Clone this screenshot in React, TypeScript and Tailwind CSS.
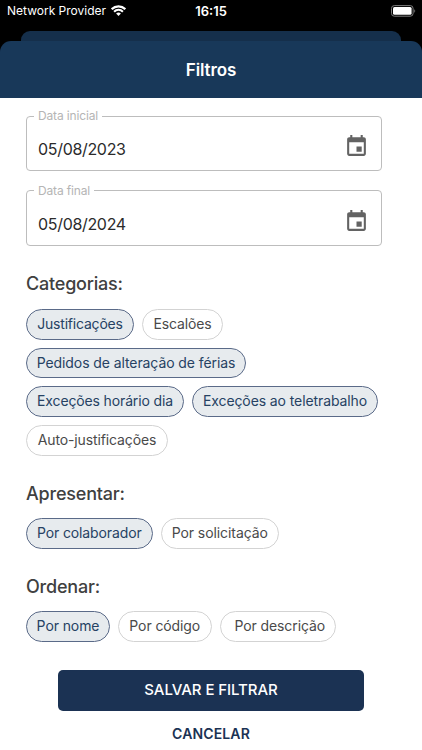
import { useState, type ReactNode } from 'react'
import clsx from 'clsx'

type Option = {
  id: string
  label: string
  className: string
}

const CATEGORIES: Option[] = [
  { id: 'justificacoes', label: 'Justificações', className: 'w-[108px] tracking-[-0.2px]' },
  { id: 'escaloes', label: 'Escalões', className: 'w-[81px] tracking-[-0.12px]' },
  { id: 'ferias', label: 'Pedidos de alteração de férias', className: 'w-[220px] tracking-[-0.09px]' },
  { id: 'horario', label: 'Exceções horário dia', className: 'w-[158px] tracking-[-0.14px]' },
  { id: 'teletrabalho', label: 'Exceções ao teletrabalho', className: 'w-[186px] tracking-[-0.1px]' },
  { id: 'auto', label: 'Auto-justificações', className: 'w-[142px] tracking-[-0.12px]' },
]

const GROUPINGS: Option[] = [
  { id: 'colaborador', label: 'Por colaborador', className: 'w-[126.5px] tracking-[-0.12px]' },
  { id: 'solicitacao', label: 'Por solicitação', className: 'w-[118.5px] tracking-[-0.08px]' },
]

const ORDERS: Option[] = [
  { id: 'nome', label: 'Por nome', className: 'w-[84px] tracking-[-0.1px]' },
  { id: 'codigo', label: 'Por código', className: 'w-[93.5px] tracking-[-0.1px]' },
  { id: 'descricao', label: 'Por descrição', className: 'w-[116.5px] pl-[4px] tracking-[-0.1px]' },
]

export default function App() {
  const [categories, setCategories] = useState(['justificacoes', 'ferias', 'horario', 'teletrabalho'])
  const [grouping, setGrouping] = useState('colaborador')
  const [order, setOrder] = useState('nome')

  const toggleCategory = (id: string) =>
    setCategories((prev) => (prev.includes(id) ? prev.filter((c) => c !== id) : [...prev, id]))

  return (
    <div className="flex h-[750px] w-[422px] flex-col overflow-hidden bg-black font-['Inter',sans-serif]">
      <StatusBar />
      <div className="mx-[21px] h-[10px] shrink-0 rounded-t-[9px] bg-[#152f4b]" />
      <header className="flex h-[57px] shrink-0 items-center justify-center rounded-t-[11px] bg-[#183859]">
        <h1 className="pt-[2px] text-[17px] font-semibold tracking-[-0.1px] text-white">Filtros</h1>
      </header>

      <main className="flex flex-1 flex-col bg-white pt-[17px]">
        <div className="flex flex-col gap-[18.5px] pr-[40.5px] pl-[26px]">
          <DateField label="Data inicial" value="05/08/2023" />
          <DateField label="Data final" value="05/08/2024" />
        </div>

        <div className="pr-[34px] pl-[26px]">
          <Section title="Categorias:" className="mt-[26.5px]">
            {CATEGORIES.map((option) => (
              <Chip
                key={option.id}
                option={option}
                selected={categories.includes(option.id)}
                onClick={() => toggleCategory(option.id)}
              />
            ))}
          </Section>
          <Section title="Apresentar:" className="mt-[25.5px]">
            {GROUPINGS.map((option) => (
              <Chip
                key={option.id}
                option={option}
                selected={grouping === option.id}
                onClick={() => setGrouping(option.id)}
              />
            ))}
          </Section>
          <Section title="Ordenar:" className="mt-[25.3px]">
            {ORDERS.map((option) => (
              <Chip
                key={option.id}
                option={option}
                selected={order === option.id}
                onClick={() => setOrder(option.id)}
              />
            ))}
          </Section>
        </div>

        <div className="mt-[28px] flex flex-col items-center">
          <button
            type="button"
            className="h-[41px] w-[305.5px] rounded-[5px] bg-[#1b3253] text-[15px] font-medium tracking-[-0.07px] text-white"
          >
            SALVAR E FILTRAR
          </button>
          <button
            type="button"
            className="mt-[13px] text-[14px] leading-5 font-semibold tracking-[0.12px] text-[#1b3253]"
          >
            CANCELAR
          </button>
        </div>
      </main>
    </div>
  )
}

function StatusBar() {
  return (
    <div className="grid h-[31px] shrink-0 grid-cols-3 items-start pt-[3px] pr-[6px] pl-[7px] text-white">
      <div className="flex h-4 items-center gap-[5px]">
        <span className="text-[12px] whitespace-nowrap">Network Provider</span>
        <WifiIcon />
      </div>
      <span className="pr-px text-center text-[13px] leading-4 font-semibold">16:15</span>
      <div className="flex h-4 items-center justify-end">
        <BatteryIcon />
      </div>
    </div>
  )
}

function WifiIcon() {
  return (
    <svg className="-mt-px h-[11px] w-[15px] shrink-0" viewBox="0 0 15 11" fill="none" stroke="currentColor">
      <path d="M0.7 4.1a9.6 9.6 0 0 1 13.6 0" strokeWidth="2.2" />
      <path d="M3.1 6.7a6.1 6.1 0 0 1 8.8 0" strokeWidth="2" />
      <path d="M7.5 11 5.1 8.6a3.4 3.4 0 0 1 4.8 0Z" fill="currentColor" stroke="none" />
    </svg>
  )
}

function BatteryIcon() {
  return (
    <svg className="-mt-px h-[12px] w-[25px] shrink-0" viewBox="0 0 25 12">
      <rect x="0.5" y="0.6" width="21.6" height="10.6" rx="2.8" fill="none" stroke="#7d7d7d" />
      <rect x="2" y="2.1" width="18.6" height="7.6" rx="1.5" fill="#fff" />
      <path d="M23.3 4.2c1.2.5 1.2 3 0 3.5Z" fill="#7d7d7d" />
    </svg>
  )
}

function DateField({ label, value }: { label: string; value: string }) {
  return (
    <fieldset className="h-[56px] rounded-[4px] border border-[#bdbdbd] pr-[12px] pl-[7px]">
      <legend className="-mt-[2px] h-[2px] px-[4px] text-[12px] leading-[1px] tracking-[-0.15px] text-[#b5b5b5]">
        {label}
      </legend>
      <div className="flex h-[54px] items-center justify-between pt-[10px] pl-[4px]">
        <span className="text-[16px] leading-5 tracking-[-0.32px] text-[#2b2b2b]">{value}</span>
        <CalendarIcon />
      </div>
    </fieldset>
  )
}

function CalendarIcon() {
  return (
    <svg className="-mt-[5px] h-[25px] w-[25px]" viewBox="0 0 24 24" fill="#636363">
      <path d="M17 12h-5v5h5v-5zM16 1v2H8V1H6v2H5c-1.11 0-1.99.9-1.99 2L3 19c0 1.1.89 2 2 2h14c1.1 0 2-.9 2-2V5c0-1.1-.9-2-2-2h-1V1h-2zm3 18H5V8h14v11z" />
    </svg>
  )
}

function Section({ title, className, children }: { title: string; className?: string; children: ReactNode }) {
  return (
    <section className={className}>
      <h2 className="pt-[0.4px] text-[18px] leading-6 font-[450] tracking-[-0.2px] text-[#404040]">{title}</h2>
      <div className="mt-[12.6px] flex flex-wrap gap-[8px]">{children}</div>
    </section>
  )
}

function Chip({ option, selected, onClick }: { option: Option; selected: boolean; onClick: () => void }) {
  return (
    <button
      type="button"
      aria-pressed={selected}
      onClick={onClick}
      className={clsx(
        'h-[30.7px] rounded-full border pb-[2px] text-[14px] whitespace-nowrap',
        option.className,
        selected ? 'border-[#5a6a88] bg-[#e7ebee] text-[#264263]' : 'border-[#d3d3d3] bg-white text-[#4a4a4a]',
      )}
    >
      {option.label}
    </button>
  )
}
